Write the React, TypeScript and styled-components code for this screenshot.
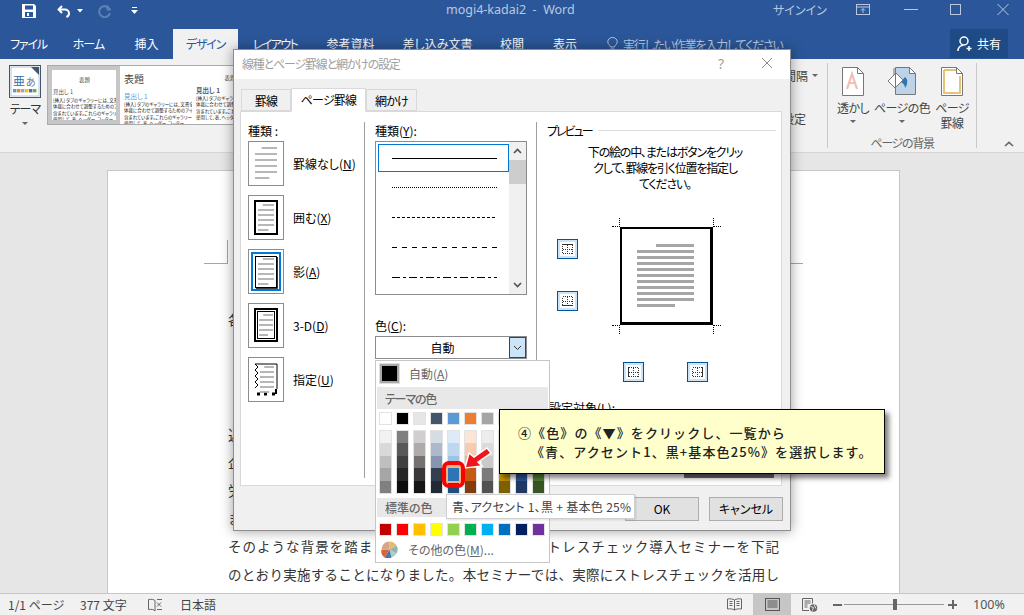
import type { ReactNode } from 'react';
import styled, { createGlobalStyle } from 'styled-components';

const GlobalStyle = createGlobalStyle`
  html, body {
    margin: 0;
    padding: 0;
    height: 100%;
    overflow: hidden;
  }
  body {
    font-family: "Noto Sans CJK JP", "Noto Sans", sans-serif;
    font-size: 12px;
    color: #000;
    font-feature-settings: "palt";
  }
  * {
    box-sizing: border-box;
  }
`;

const Window = styled.div`
  position: relative;
  width: 1024px;
  height: 615px;
  display: flex;
  flex-direction: column;
  overflow: hidden;
  background: #e6e6e6;
`;

const Spacer = styled.span<{ $width: number }>`
  width: ${(p) => p.$width}px;
  flex: none;
`;

const Glyph = styled.svg<{ $left?: number }>`
  flex: none;
  margin-left: ${(p) => p.$left ?? 0}px;
`;

/* title bar */
const TitleBar = styled.div`
  height: 29px;
  flex: none;
  background: #2b579a;
  display: flex;
  align-items: flex-start;
  color: #b9c8e0;
  padding-left: 22px;
`;

const QuickAccess = styled.div`
  width: 424px;
  flex: none;
  display: flex;
  align-items: center;
  gap: 6px;
  margin-top: 4px;
`;

const DocTitle = styled.div`
  width: 327px;
  flex: none;
  font-family: "Noto Sans", sans-serif;
  font-size: 12.5px;
  line-height: 19px;
`;

const SignIn = styled.div`
  width: 83px;
  flex: none;
  font-size: 12px;
  line-height: 19px;
`;

const WindowButtons = styled.div`
  display: flex;
  align-items: center;
  gap: 34px;
  height: 19px;
`;

/* tab row */
const TabRow = styled.div`
  height: 30px;
  flex: none;
  background: #2b579a;
  display: flex;
  align-items: stretch;
`;

const Tab = styled.div<{ $width: number; $active?: boolean; $spacing: number }>`
  width: ${(p) => p.$width}px;
  flex: none;
  display: flex;
  align-items: center;
  justify-content: center;
  font-size: 12px;
  padding-bottom: 1px;
  letter-spacing: ${(p) => p.$spacing}px;
  color: ${(p) => (p.$active ? '#2b579a' : '#fff')};
  background: ${(p) => (p.$active ? '#f1f1f1' : 'transparent')};
`;

const TellMe = styled.div`
  width: 358px;
  flex: none;
  display: flex;
  align-items: center;
  gap: 5px;
  padding-left: 15px;
  color: #b9c8e0;
  letter-spacing: -1.2px;
`;

const ShareButton = styled.div`
  width: 58px;
  height: 29px;
  flex: none;
  background: #1e4a86;
  color: #fff;
  display: flex;
  align-items: center;
  justify-content: center;
  gap: 3px;
`;

/* ribbon */
const Ribbon = styled.div`
  height: 94px;
  flex: none;
  background: #f1f1f1;
  border-bottom: 1px solid #d6d6d6;
  display: flex;
`;

const ThemeButton = styled.div`
  width: 47px;
  flex: none;
  padding: 6px 6px 0 9px;
  display: flex;
  flex-direction: column;
  align-items: center;
`;

const ThemeLabel = styled.div`
  text-align: center;
  font-size: 12px;
  margin-top: 3px;
  line-height: 16px;
  color: #333;
  letter-spacing: -1px;
  white-space: nowrap;
`;

const Caret = styled.span<{ $top?: number }>`
  display: block;
  width: 0;
  height: 0;
  flex: none;
  border-left: 3px solid transparent;
  border-right: 3px solid transparent;
  border-top: 3px solid #666;
  margin-top: ${(p) => p.$top ?? 0}px;
`;

const Gallery = styled.div`
  width: 713px;
  height: 60px;
  margin-top: 6px;
  flex: none;
  border: 1px solid #ababab;
  background: #fff;
  display: flex;
  overflow: hidden;
`;

const GalleryItem = styled.div<{ $selected?: boolean }>`
  width: 72px;
  flex: none;
  background: #fff;
  border: ${(p) => (p.$selected ? '4px solid #c6c6c6' : 'none')};
  padding: ${(p) => (p.$selected ? '4px 0 0 1px' : '6px 0 0 4px')};
  overflow: hidden;
  font-size: 4.5px;
  line-height: 6.4px;
  color: #222;
  white-space: nowrap;
`;

const GalleryTitle = styled.div<{ $large?: boolean }>`
  text-align: ${(p) => (p.$large ? 'left' : 'center')};
  font-size: ${(p) => (p.$large ? 10 : 5.5)}px;
  line-height: ${(p) => (p.$large ? 14 : 13)}px;
  color: #444;
  margin-bottom: ${(p) => (p.$large ? 6 : 1)}px;
`;

const GalleryHeading = styled.div<{ $tone?: 'blue' | 'bold' }>`
  font-size: ${(p) => (p.$tone ? 6.5 : 5.5)}px;
  line-height: 9px;
  font-weight: ${(p) => (p.$tone === 'bold' ? 700 : 400)};
  color: ${(p) => (p.$tone === 'blue' ? '#5b9bd5' : '#555')};
`;

const SpacingGroup = styled.div`
  flex: 1;
  min-width: 0;
  display: flex;
  flex-direction: column;
  align-items: flex-end;
  gap: 26px;
  padding: 8px 9px 0 0;
  color: #444;
  white-space: nowrap;
  font-size: 12px;
`;

const SpacingRow = styled.div<{ $inset?: number }>`
  display: flex;
  align-items: center;
  gap: 4px;
  margin-right: ${(p) => p.$inset ?? 0}px;
`;

const RibbonGroup = styled.div`
  width: 150px;
  flex: none;
  height: 85px;
  margin-top: 4px;
  border-left: 1px solid #c8c8c8;
  border-right: 1px solid #c8c8c8;
  display: flex;
  flex-direction: column;
`;

const RibbonButtons = styled.div`
  display: flex;
  height: 72px;
  flex: none;
  padding-left: 5px;
`;

const RibbonButton = styled.div<{ $width: number }>`
  width: ${(p) => p.$width}px;
  flex: none;
  display: flex;
  flex-direction: column;
  align-items: center;
  padding-top: 4px;
  font-size: 12px;
  line-height: 15px;
  color: #444;
  text-align: center;
  white-space: nowrap;
  letter-spacing: -0.6px;
  svg {
    margin-bottom: 4px;
  }
`;

const GroupLabel = styled.div`
  text-align: center;
  color: #666;
  font-size: 12px;
  line-height: 16px;
  letter-spacing: -1.3px;
`;

const CollapseArea = styled.div`
  width: 47px;
  flex: none;
  display: flex;
  align-items: flex-end;
  justify-content: flex-end;
  padding: 0 10px 5px 0;
`;

/* document */
const Workspace = styled.div`
  flex: 1;
  min-height: 0;
  background: #e6e6e6;
  padding: 17px 0 0 107px;
  overflow: hidden;
`;

const Page = styled.div`
  position: relative;
  width: 793px;
  height: 500px;
  background: #fff;
  border: 1px solid #c6c6c6;
  padding: 134px 0 0 120px;
`;

const CropMark = styled.span<{ $side: 'left' | 'right' }>`
  position: absolute;
  top: 69px;
  width: 24px;
  height: 24px;
  border-bottom: 1px solid #a6a6a6;
  ${(p) =>
    p.$side === 'left'
      ? 'left: 96px; border-right: 1px solid #a6a6a6;'
      : 'left: 671px; border-left: 1px solid #a6a6a6;'}
`;

const DocLine = styled.div<{ $gap?: number }>`
  width: 551px;
  height: 28px;
  line-height: 28px;
  margin-top: ${(p) => p.$gap ?? 0}px;
  font-size: 13.5px;
  color: #333;
  white-space: nowrap;
  font-feature-settings: normal;
  text-align: justify;
  text-align-last: justify;
  text-justify: inter-character;
`;

/* status bar */
const StatusBar = styled.div`
  height: 22px;
  flex: none;
  background: #f1f1f1;
  border-top: 1px solid #c6c6c6;
  display: flex;
  align-items: stretch;
  padding-left: 8px;
  color: #444;
  font-size: 12px;
`;

const StatusItem = styled.div<{ $width: number }>`
  width: ${(p) => p.$width}px;
  flex: none;
  display: flex;
  align-items: center;
  white-space: nowrap;
`;

const ViewButton = styled.div<{ $active?: boolean; $width: number }>`
  width: ${(p) => p.$width}px;
  flex: none;
  display: flex;
  align-items: center;
  justify-content: center;
  background: ${(p) => (p.$active ? '#c6c6c6' : 'transparent')};
`;

const ZoomGroup = styled.div`
  display: flex;
  align-items: center;
  margin-left: 4px;
`;

const ZoomSign = styled.span`
  width: 9px;
  height: 9px;
  flex: none;
  position: relative;
  &::before {
    content: '';
    position: absolute;
    left: 0;
    right: 0;
    top: 4px;
    height: 2px;
    background: #666;
  }
`;

const ZoomPlus = styled(ZoomSign)`
  &::after {
    content: '';
    position: absolute;
    top: 0;
    bottom: 0;
    left: 4px;
    width: 2px;
    background: #666;
  }
`;

const ZoomTrack = styled.div`
  width: 100px;
  height: 1px;
  margin: 0 4px 0 2px;
  background: #999;
  position: relative;
  &::after {
    content: '';
    position: absolute;
    left: 49px;
    top: -5px;
    width: 4px;
    height: 11px;
    background: #666;
  }
`;

const ZoomValue = styled.div`
  margin-left: 16px;
  font-size: 12.5px;
  font-family: "Noto Sans", sans-serif;
  color: #555;
`;

/* dialog */
const Dialog = styled.div`
  position: absolute;
  left: 233px;
  top: 49px;
  width: 558px;
  height: 482px;
  background: #f0f0f0;
  border: 1px solid #8e8e8e;
  box-shadow: 0 0 12px rgba(0, 0, 0, 0.4);
  display: flex;
  flex-direction: column;
`;

const DialogTitle = styled.div`
  height: 29px;
  flex: none;
  background: #fff;
  display: flex;
  align-items: center;
  padding: 0 0 3px 8px;
  color: #a0a0a0;
`;

const DialogTitleText = styled.div`
  flex: 1;
  letter-spacing: -1.2px;
`;

const HelpMark = styled.div`
  width: 43px;
  font-family: "Noto Sans", sans-serif;
  color: #a0a0a0;
  font-size: 14px;
`;

const CloseSlot = styled.div`
  width: 29px;
  display: flex;
`;

const DialogTabs = styled.div`
  height: 32px;
  flex: none;
  display: flex;
  align-items: flex-end;
  padding-left: 7px;
  position: relative;
  z-index: 1;
`;

const DialogTab = styled.div<{ $active?: boolean; $width: number }>`
  width: ${(p) => p.$width}px;
  height: ${(p) => (p.$active ? 24 : 22)}px;
  text-align: center;
  line-height: ${(p) => (p.$active ? 22 : 21)}px;
  font-size: 12px;
  letter-spacing: -0.8px;
  background: ${(p) => (p.$active ? '#fff' : '#f0f0f0')};
  border: 1px solid #d9d9d9;
  border-bottom: ${(p) => (p.$active ? '1px solid #fff' : '1px solid #d9d9d9')};
  margin-bottom: ${(p) => (p.$active ? -1 : 0)}px;
`;

const Panel = styled.div`
  width: 542px;
  height: 375px;
  margin-left: 6px;
  flex: none;
  background: #fff;
  border: 1px solid #d9d9d9;
  display: flex;
  padding-top: 10px;
`;

const StyleColumn = styled.div`
  width: 124px;
  flex: none;
  padding-left: 7px;
  border-right: 1px solid #a0a0a0;
  height: 356px;
`;

const FieldLabel = styled.div`
  height: 19px;
  line-height: 17px;
  font-size: 12px;
`;

const StyleOption = styled.div`
  display: flex;
  align-items: center;
  gap: 9px;
  height: 45px;
  margin-bottom: 9px;
  font-size: 12px;
`;

const ThumbBox = styled.div`
  width: 36px;
  height: 45px;
  flex: none;
  border: 1px solid #8c8c90;
  background: #fff;
  display: flex;
`;

const LineColumn = styled.div`
  width: 172px;
  flex: none;
  padding: 0 9px 0 10px;
  border-right: 1px solid #a0a0a0;
  height: 356px;
`;

const LineList = styled.div`
  width: 152px;
  height: 154px;
  border: 1px solid #8c8c90;
  display: flex;
  margin-bottom: 22px;
`;

const LineRows = styled.div`
  width: 133px;
  flex: none;
  padding: 2px 0 0 2px;
  display: flex;
  flex-direction: column;
`;

const LineRow = styled.div<{ $selected?: boolean }>`
  height: ${(p) => (p.$selected ? 28 : 30)}px;
  flex: none;
  display: flex;
  align-items: center;
  padding-left: 13px;
  border: ${(p) => (p.$selected ? '1px solid #0078d7' : 'none')};
  margin-left: ${(p) => (p.$selected ? 0 : 1)}px;
`;

const LineSample = styled.div<{ $pattern: string }>`
  width: 105px;
  height: 1px;
  background: ${(p) => p.$pattern};
`;

const ScrollTrack = styled.div`
  flex: 1;
  background: #f0f0f0;
  display: flex;
  flex-direction: column;
  align-items: center;
`;

const ScrollArrow = styled.div`
  height: 18px;
  flex: none;
  display: flex;
  align-items: center;
  justify-content: center;
`;

const ScrollThumb = styled.div`
  width: 100%;
  height: 24px;
  background: #cdcdcd;
  margin-bottom: auto;
`;

const ColorCombo = styled.div`
  width: 152px;
  height: 23px;
  border: 1px solid #8c8c90;
  display: flex;
  align-items: stretch;
  font-size: 12px;
`;

const ComboValue = styled.div`
  flex: 1;
  text-align: center;
  line-height: 21px;
`;

const ComboArrow = styled.div`
  width: 17px;
  flex: none;
  background: #cce4f7;
  border: 1px solid #005499;
  display: flex;
  align-items: center;
  justify-content: center;
`;

const PreviewColumn = styled.div`
  flex: 1;
  padding-left: 10px;
  min-width: 0;
`;

const PreviewHeader = styled.div`
  display: flex;
  align-items: center;
  gap: 6px;
  height: 17px;
  padding-right: 5px;
  letter-spacing: -2px;
  &::after {
    content: '';
    flex: 1;
    height: 1px;
    background: #dcdcdc;
  }
`;

const PreviewHint = styled.div`
  width: 190px;
  margin: 5px 0 0 23px;
  text-align: center;
  line-height: 16px;
  font-size: 12px;
  letter-spacing: -1.2px;
`;

const PreviewStage = styled.div`
  display: flex;
  align-items: flex-start;
  margin: 35px 0 0 10px;
`;

const SideButtons = styled.div`
  width: 21px;
  flex: none;
  display: flex;
  flex-direction: column;
  gap: 32px;
  padding-top: 12px;
`;

const BorderToggle = styled.div`
  width: 21px;
  height: 20px;
  flex: none;
  background: #cce4f7;
  border: 1px solid #005499;
  display: flex;
  align-items: center;
  justify-content: center;
`;

const PreviewPage = styled.div`
  position: relative;
  width: 93px;
  height: 98px;
  margin-left: 42px;
  border: 2px solid #000;
  border-right-width: 3px;
  border-bottom-width: 3px;
  padding: 15px 0 0 15px;
  display: flex;
  flex-direction: column;
  gap: 3px;
`;

const PreviewLine = styled.div<{ $width: number; $right?: boolean }>`
  width: ${(p) => p.$width}px;
  height: 3px;
  background: #a6a6a6;
  margin-left: ${(p) => (p.$right ? 57 - p.$width : 0)}px;
`;

const CornerMark = styled.span<{ $x: 'l' | 'r'; $y: 't' | 'b' }>`
  position: absolute;
  width: 8px;
  height: 9px;
  ${(p) => (p.$x === 'l' ? 'left: -10px; border-right: 1px dotted #000;' : 'right: -11px; border-left: 1px dotted #000;')}
  ${(p) => (p.$y === 't' ? 'top: -11px; border-bottom: 1px dotted #000;' : 'bottom: -12px; border-top: 1px dotted #000;')}
`;

const BottomButtons = styled.div`
  display: flex;
  gap: 43px;
  margin: 37px 0 0 76px;
`;

const ApplyLabel = styled.div`
  margin-top: 18px;
  padding-left: 2px;
  line-height: 16px;
`;

const OptionsRow = styled.div`
  display: flex;
  justify-content: flex-end;
  padding: 58px 7px 0 0;
`;

const OptionsButton = styled.div`
  width: 90px;
  height: 4px;
  background: #6a6a6a;
`;

const DialogActions = styled.div`
  display: flex;
  justify-content: flex-end;
  gap: 10px;
  padding: 11px 7px 0 0;
`;

const ActionButton = styled.div<{ $width: number }>`
  width: ${(p) => p.$width}px;
  height: 24px;
  background: #e1e1e1;
  border: 1px solid #adadad;
  text-align: center;
  line-height: 22px;
  font-size: 12px;
`;

/* colour dropdown */
const ColorMenu = styled.div`
  position: absolute;
  left: 375px;
  top: 360px;
  width: 175px;
  height: 203px;
  background: #fff;
  border: 1px solid #c6c6c6;
  padding: 0 1px;
`;

const MenuRow = styled.div`
  height: 25px;
  display: flex;
  align-items: center;
  gap: 10px;
  padding-left: 3px;
  color: #666;
`;

const AutoSwatch = styled.span`
  width: 19px;
  height: 19px;
  flex: none;
  background: #000;
  border: 2px solid #a8a8a8;
  outline: 1px solid #e0e0e0;
`;

const MenuHeader = styled.div<{ $height: number; $top: number; $spacing?: number }>`
  height: ${(p) => p.$height}px;
  margin-top: ${(p) => p.$top}px;
  background: #e8e8e8;
  display: flex;
  align-items: center;
  padding-left: 8px;
  font-weight: 500;
  color: #666;
  letter-spacing: ${(p) => p.$spacing ?? 0}px;
`;

const PaletteRow = styled.div<{ $top: number }>`
  display: grid;
  grid-template-columns: repeat(10, 13px);
  column-gap: 4px;
  margin-top: ${(p) => p.$top}px;
  padding-left: 2px;
`;

const Swatch = styled.span<{ $color: string }>`
  display: block;
  height: 13px;
  background: ${(p) => p.$color};
  border: 1px solid #e2e2e2;
`;

const ShadeColumn = styled.div`
  display: flex;
  flex-direction: column;
  border: 1px solid #e2e2e2;
`;

const Shade = styled.span<{ $color: string; $selected?: boolean }>`
  display: block;
  height: 12.4px;
  background: ${(p) => p.$color};
  position: relative;
  ${(p) =>
    p.$selected &&
    `
    z-index: 2;
    &::before {
      content: '';
      position: absolute;
      inset: -2px -2px;
      border: 2px solid #f4b183;
    }
    &::after {
      content: '';
      position: absolute;
      inset: -7px -6px;
      border: 4px solid #f00;
      border-radius: 7px;
    }
  `}
`;

const OtherRow = styled.div`
  height: 24px;
  margin-top: 2px;
  display: flex;
  align-items: center;
  gap: 10px;
  padding-left: 4px;
  color: #666;
`;

const RedArrow = styled.svg`
  position: absolute;
  left: 463px;
  top: 446px;
`;

/* callout and tooltip */
const Callout = styled.div`
  position: absolute;
  left: 499px;
  top: 409px;
  width: 386px;
  height: 65px;
  background: #ffffcc;
  border: 1px solid #000;
  box-shadow: 4px 4px 5px rgba(0, 0, 0, 0.5);
  padding-top: 13px;
  font-size: 13px;
  font-weight: 500;
  line-height: 19px;
  color: #222;
  font-feature-settings: normal;
  letter-spacing: 1.1px;
  white-space: nowrap;
`;

const CalloutLine = styled.div<{ $indent: number }>`
  padding-left: ${(p) => p.$indent}px;
`;

const Tooltip = styled.div`
  position: absolute;
  left: 446px;
  top: 494px;
  width: 189px;
  height: 25px;
  background: #fff;
  border: 1px solid #cfcfcf;
  box-shadow: 1px 1px 2px rgba(0, 0, 0, 0.12);
  color: #444;
  font-size: 12px;
  line-height: 23px;
  padding-left: 5px;
  white-space: nowrap;
  letter-spacing: 0.3px;
`;

const pale = '#b9c8e0';

function SaveIcon() {
  return (
    <svg width="14" height="14" viewBox="0 0 14 14">
      <path d="M0 0h12l2 2v12H0z" fill="#fff" />
      <rect x="3" y="1.5" width="8" height="4" fill="#2b579a" />
      <rect x="3" y="8" width="8" height="5" fill="#2b579a" />
      <rect x="5" y="9" width="2" height="3" fill="#fff" />
    </svg>
  );
}

function UndoIcon() {
  return (
    <svg width="14" height="13" viewBox="0 0 14 13" fill="none" stroke="#fff" strokeWidth="2">
      <path d="M5 1 1.6 4.5 5 8" />
      <path d="M2 4.500h6a4 4 0 0 1 4 4c0 1.600-1.200 3-2.600 3.500" />
    </svg>
  );
}

function RedoIcon() {
  return (
    <svg width="14" height="14" viewBox="0 0 14 14" fill="none" stroke="#5e80b4" strokeWidth="2">
      <path d="M9.500 1.500v4h3.500" />
      <path d="M11.500 5A5.500 5.500 0 1 0 12 9" />
    </svg>
  );
}

function SmallCaret() {
  return (
    <svg width="6" height="4" viewBox="0 0 6 4">
      <path d="M0 0h6L3 3.500z" fill="#fff" />
    </svg>
  );
}

function CustomizeIcon() {
  return (
    <svg width="7" height="8" viewBox="0 0 7 8" fill="#fff">
      <rect x="1" y="0" width="5" height="1" />
      <path d="M0 3h7L3.500 7z" />
    </svg>
  );
}

function WindowIcons() {
  return (
    <WindowButtons>
      <Glyph width="14" height="11" viewBox="0 0 14 11" fill="none" stroke={pale}>
        <rect x="0.5" y="0.5" width="13" height="10" />
        <path d="M0.500 3h13M7 9V5M5 6.500 7 4.500l2 2" />
      </Glyph>
      <Glyph width="14" height="11" viewBox="0 0 14 11" stroke={pale}>
        <path d="M0 5.500h14" />
      </Glyph>
      <Glyph width="12" height="11" viewBox="0 0 12 11" fill="none" stroke={pale} $left={-2}>
        <rect x="0.5" y="0.5" width="10" height="10" />
      </Glyph>
      <Glyph width="14" height="11" viewBox="0 0 14 11" stroke={pale}>
        <path d="M1.500 0 12.500 11M12.500 0 1.500 11" />
      </Glyph>
    </WindowButtons>
  );
}

function BulbIcon() {
  return (
    <svg width="11" height="15" viewBox="0 0 11 15" fill="none" stroke={pale}>
      <path d="M3.500 10C3 8 .8 7.300.8 4.700a4.700 4.200 0 0 1 9.400 0C10.200 7.300 8 8 7.500 10z" />
      <path d="M3.500 12h4M4.500 14h2" />
    </svg>
  );
}

function ShareIcon() {
  return (
    <svg width="17" height="16" viewBox="0 0 17 16" fill="none" stroke="#fff" strokeWidth="1.5">
      <circle cx="7" cy="5" r="4" />
      <path d="M1 15c0-3 2-5.500 5-5.800M12 10v5M9.500 12.500h5" />
    </svg>
  );
}

function ThemeIcon() {
  return (
    <svg width="32" height="33" viewBox="0 0 32 33">
      <rect x="0.5" y="0.5" width="31" height="32" fill="#fff" stroke="#44546a" />
      <rect x="2" y="2" width="28" height="29" fill="#fff" stroke="#b8c4d6" />
      <path d="M22 2h8v8z" fill="#44546a" />
      <text x="4" y="21" fontSize="12" fill="#3a6ea5" fontFamily='"Noto Sans CJK JP"'>亜</text>
      <text x="17" y="21" fontSize="10" fill="#777" fontFamily='"Noto Sans CJK JP"'>あ</text>
      {['#5b9bd5', '#ed7d31', '#a5a5a5', '#ffc000', '#4472c4', '#70ad47'].map((c, i) => (
        <rect key={c} x={4 + i * 4} y="24" width="3.4" height="3.4" fill={c} />
      ))}
    </svg>
  );
}

function PageSheet({ children }: { children?: ReactNode }) {
  return (
    <svg width="30" height="29" viewBox="0 0 30 29" fill="none">
      {children}
      <path d="M8.500.5h14l6 6v21h-20zM22.500.5v6h6" stroke="#777" />
    </svg>
  );
}

function WatermarkIcon() {
  return (
    <svg width="22" height="29" viewBox="0 0 22 29" fill="none">
      <path d="M.5.5h15l6 6v22H.5z" fill="#fff" stroke="#777" />
      <path d="M15.500.5v6h6" stroke="#777" />
      <path d="M5 22 10 7l5 15M7 16h7" stroke="#f0bfb4" strokeWidth="2.2" />
    </svg>
  );
}

function PageColorIcon() {
  return (
    <PageSheet>
      <path d="M8.500.5h14l6 6v21h-20z" fill="#bcd3e8" />
      <path d="M22.500.5v6h6z" fill="#fff" />
      <path d="M18 10c3 2 3 7 0 11 0-3-2-5-4-6z" fill="#2e75b5" />
      <path d="M1 14 9 6l7 7-8 8z" fill="#fff" stroke="#777" />
      <path d="M7 1v7" stroke="#777" />
    </PageSheet>
  );
}

function PageBorderIcon() {
  return (
    <svg width="22" height="29" viewBox="0 0 22 29" fill="none">
      <path d="M.5.5h15l6 6v22H.5z" fill="#fff" stroke="#777" />
      <path d="M15.500.5v6h6" stroke="#777" />
      <path d="M3 3h12M3 3v23h16V9" stroke="#e9c27a" strokeWidth="2" />
    </svg>
  );
}

function ChevronUp() {
  return (
    <svg width="10" height="6" viewBox="0 0 10 6" fill="none" stroke="#666" strokeWidth="1.6">
      <path d="M1 5 5 1.400 9 5" />
    </svg>
  );
}

function Chevron({ down, color = '#505050' }: { down?: boolean; color?: string }) {
  return (
    <svg width="9" height="6" viewBox="0 0 9 6" fill="none" stroke={color} strokeWidth={down && color !== '#505050' ? 1 : 1.6}>
      <path d={down ? 'M1 1l3.500 3.500L8 1' : 'M1 5l3.500-3.500L8 5'} />
    </svg>
  );
}

const thumbLines = (x: number, right: number, y: number, step: number, count: number) =>
  Array.from({ length: count }, (_, i) => {
    const first = i === 0;
    const last = i === count - 1;
    const x1 = first ? x + (right - x) * 0.3 : x;
    const x2 = last ? x + (right - x) * 0.65 : right;
    return <path key={i} d={`M${x1} ${y + i * step}H${x2}`} stroke="#a6a6a6" strokeWidth="1.6" />;
  });

function StyleThumb({ kind }: { kind: 'none' | 'box' | 'shadow' | '3d' | 'custom' }) {
  return (
    <svg width="34" height="43" viewBox="0 0 34 43" fill="none">
      {kind === 'none' && thumbLines(6, 28, 6, 6, 6)}
      {kind === 'box' && (
        <>
          <rect x="6" y="5" width="22" height="33" stroke="#000" strokeWidth="2" />
          {thumbLines(9, 25, 9, 5, 6)}
        </>
      )}
      {kind === 'shadow' && (
        <>
          <rect x="3" y="3" width="28" height="37" stroke="#0078d7" strokeWidth="2" />
          <rect x="6.500" y="6.500" width="21" height="31" stroke="#000" />
          <path d="M28 7v31H7" stroke="#000" strokeWidth="1.6" />
          {thumbLines(9, 25, 9, 5, 6)}
        </>
      )}
      {kind === '3d' && (
        <>
          <rect x="6" y="5" width="22" height="32" stroke="#000" strokeWidth="2" />
          <rect x="8.500" y="7.500" width="17" height="27" stroke="#000" />
          {thumbLines(10, 24, 11, 5, 5)}
        </>
      )}
      {kind === 'custom' && (
        <>
          <path d="M6 6H28V31" stroke="#000" />
          <path d="M6 6l3 3-3 3 3 3-3 3 3 3-3 3 3 3-3 3" stroke="#000" />
          <path d="M8 36h3M15 36h3M23 36h3" stroke="#000" strokeWidth="3" />
          <path d="M27 36v-5" stroke="#000" strokeWidth="2" />
          {thumbLines(11, 25, 9, 5, 6)}
        </>
      )}
    </svg>
  );
}

function EdgeGlyph({ edge }: { edge: 'top' | 'bottom' | 'left' | 'right' }) {
  const solid = {
    top: 'M3 3.500H14',
    bottom: 'M3 12.500H14',
    left: 'M3.500 3V13',
    right: 'M13.500 3V13',
  }[edge];
  return (
    <svg width="17" height="16" viewBox="0 0 17 16" fill="none" shapeRendering="crispEdges">
      <rect x="1" y="1" width="15" height="14" fill="#fff" />
      <rect x="3.500" y="3.500" width="10" height="9" stroke="#333" strokeDasharray="1 1" />
      <path d="M8.500 3.500v9M3.500 8.500h10" stroke="#333" strokeDasharray="1 1" />
      <path d={solid} stroke="#333" />
    </svg>
  );
}

function PieIcon() {
  return (
    <svg width="17" height="17" viewBox="0 0 17 17">
      <path d="M8.500 8.500V.5a8 8 0 0 1 7 4z" fill="#e9b872" />
      <path d="M8.500 8.500l7-4a8 8 0 0 1 0 8z" fill="#8fb8a8" />
      <path d="M8.500 8.500l7 4a8 8 0 0 1-5 4z" fill="#8fb8a8" opacity="0.7" />
      <path d="M8.500 8.500l2 8a8 8 0 0 1-7 0z" fill="#3f78b5" />
      <path d="M8.500 8.500l-5 8a8 8 0 0 1-3-8z" fill="#d9633a" />
      <path d="M8.500 8.500h-8a8 8 0 0 1 8-8z" fill="#d8a48c" />
    </svg>
  );
}

function BookIcon() {
  return (
    <svg width="15" height="14" viewBox="0 0 15 14" fill="none" stroke="#666">
      <path d="M7 2.500C6 1.500 3 1 .5 1.500v10c2.500-.5 5.500 0 6.500 1.500" />
      <path d="M7 2.500V13" />
      <path d="M9 4.500l4 4M13 4.500l-4 4M9 1.500h5M9 11.500h5" />
    </svg>
  );
}

function ReadIcon() {
  return (
    <svg width="15" height="13" viewBox="0 0 15 13" fill="none" stroke="#666">
      <path d="M7.500 2C6 1 3 .5.500 1v10c2.500-.5 5.500 0 7 1 1.500-1 4.500-1.500 7-1V1c-2.500-.5-5.500 0-7 1zM7.500 2v10" />
      <path d="M2.500 3.500h3M2.500 5.500h3M2.500 7.500h3M9.500 3.500h3M9.500 5.500h3M9.500 7.500h3" />
    </svg>
  );
}

function PrintIcon() {
  return (
    <svg width="15" height="13" viewBox="0 0 15 13" fill="none" stroke="#555">
      <rect x="0.5" y="0.5" width="14" height="12" />
      <path d="M2.500 3h10M2.500 5h10M2.500 7h10M2.500 9h10" />
    </svg>
  );
}

function WebIcon() {
  return (
    <svg width="16" height="14" viewBox="0 0 16 14" fill="none" stroke="#666">
      <path d="M7 12.500H.5V.5h10v5M2.500 3h6M2.500 5h6M2.500 7h3M2.500 9h3" />
      <circle cx="11.500" cy="10" r="3.800" fill="#666" stroke="none" />
      <path d="M8.500 8.500l3 1-1 3M12 6.500l2 4" stroke="#fff" strokeWidth="0.800" />
    </svg>
  );
}

const themeColumns = [
  { base: '#ffffff', shades: ['#f2f2f2', '#d9d9d9', '#bfbfbf', '#a6a6a6', '#808080'] },
  { base: '#000000', shades: ['#7f7f7f', '#595959', '#404040', '#262626', '#0d0d0d'] },
  { base: '#e7e6e6', shades: ['#d0cece', '#afabab', '#767171', '#3a3838', '#171616'] },
  { base: '#44546a', shades: ['#d6dce4', '#adb9ca', '#8496b0', '#333f4f', '#222a35'] },
  { base: '#5b9bd5', shades: ['#deeaf6', '#bdd7ee', '#9cc3e5', '#2e75b5', '#1e4e79'] },
  { base: '#ed7d31', shades: ['#fbe5d5', '#f7cbac', '#f4b183', '#c55a11', '#833c0b'] },
  { base: '#a5a5a5', shades: ['#ededed', '#dbdbdb', '#c9c9c9', '#7b7b7b', '#525252'] },
  { base: '#ffc000', shades: ['#fff2cc', '#fee599', '#ffd965', '#bf8f00', '#7f6000'] },
  { base: '#4472c4', shades: ['#d9e2f3', '#b4c6e7', '#8eaadb', '#2f5496', '#1f3864'] },
  { base: '#70ad47', shades: ['#e2efd9', '#c5e0b3', '#a8d08d', '#538135', '#375623'] },
];

const standardColors = [
  '#c00000', '#ff0000', '#ffc000', '#ffff00', '#92d050',
  '#00b050', '#00b0f0', '#0070c0', '#002060', '#7030a0',
];

const ribbonTabs = [
  { label: 'ファイル', width: 57, spacing: -1.2 },
  { label: 'ホーム', width: 63, spacing: -1 },
  { label: '挿入', width: 53, spacing: 0 },
  { label: 'デザイン', width: 65, spacing: -1.2, active: true },
  { label: 'レイアウト', width: 74, spacing: -1.6 },
  { label: '参考資料', width: 77, spacing: 0 },
  { label: '差し込み文書', width: 97, spacing: 0 },
  { label: '校閲', width: 52, spacing: 0 },
  { label: '表示', width: 54, spacing: 0 },
];

const lineStyles = [
  '#000',
  'repeating-linear-gradient(90deg, #000 0 1px, #fff 1px 2px)',
  'repeating-linear-gradient(90deg, #000 0 3px, #fff 3px 5px)',
  'repeating-linear-gradient(90deg, #000 0 5px, #fff 5px 10px)',
  'repeating-linear-gradient(90deg, #000 0 8px, #fff 8px 11px, #000 11px 14px, #fff 14px 17px)',
];

function BodyLines() {
  return (
    <>
      <div>[挿入] タブのギャラリーには、文書全体の</div>
      <div>体裁に合わせて調整するためのアイテムが</div>
      <div>含まれています。これらのギャラリーを</div>
      <div>使用して、表、ヘッダー、フッター、</div>
    </>
  );
}

export default function App() {
  return (
    <Window>
      <GlobalStyle />

      <TitleBar>
        <QuickAccess>
          <SaveIcon />
          <Spacer $width={9} />
          <UndoIcon />
          <SmallCaret />
          <Spacer $width={3} />
          <RedoIcon />
          <Spacer $width={7} />
          <CustomizeIcon />
        </QuickAccess>
        <DocTitle>mogi4-kadai2&nbsp; -&nbsp; Word</DocTitle>
        <SignIn>サインイン</SignIn>
        <WindowIcons />
      </TitleBar>

      <TabRow>
        {ribbonTabs.map((t) => (
          <Tab key={t.label} $width={t.width} $active={t.active} $spacing={t.spacing}>
            {t.label}
          </Tab>
        ))}
        <TellMe>
          <BulbIcon />
          実行したい作業を入力してください
        </TellMe>
        <ShareButton>
          <ShareIcon />
          共有
        </ShareButton>
      </TabRow>

      <Ribbon>
        <ThemeButton>
          <ThemeIcon />
          <ThemeLabel>テーマ</ThemeLabel>
          <Caret $top={5} />
        </ThemeButton>
        <Gallery>
          <GalleryItem $selected>
            <GalleryTitle>表題</GalleryTitle>
            <GalleryHeading>見出し 1</GalleryHeading>
            <BodyLines />
          </GalleryItem>
          <GalleryItem>
            <GalleryTitle $large>表題</GalleryTitle>
            <GalleryHeading $tone="blue">見出し 1</GalleryHeading>
            <BodyLines />
          </GalleryItem>
          <GalleryItem>
            <GalleryTitle>表題</GalleryTitle>
            <GalleryHeading $tone="bold">見出し 1</GalleryHeading>
            <BodyLines />
          </GalleryItem>
        </Gallery>
        <SpacingGroup>
          <SpacingRow>
            段落の間隔
            <Caret />
          </SpacingRow>
          <SpacingRow $inset={12}>既定に設定</SpacingRow>
        </SpacingGroup>
        <RibbonGroup>
          <RibbonButtons>
            <RibbonButton $width={40}>
              <WatermarkIcon />
              透かし
              <Caret $top={5} />
            </RibbonButton>
            <RibbonButton $width={58}>
              <PageColorIcon />
              ページの色
              <Caret $top={5} />
            </RibbonButton>
            <RibbonButton $width={42}>
              <PageBorderIcon />
              ページ
              <br />
              罫線
            </RibbonButton>
          </RibbonButtons>
          <GroupLabel>ページの背景</GroupLabel>
        </RibbonGroup>
        <CollapseArea>
          <ChevronUp />
        </CollapseArea>
      </Ribbon>

      <Workspace>
        <Page>
          <CropMark $side="left" />
          <CropMark $side="right" />
          <DocLine>各位</DocLine>
          <DocLine $gap={87}>近年、企業のメンタルヘルス対策の重要性が高まっています。</DocLine>
          <DocLine>企業には従業員の心の健康を守る取り組みが求められています。</DocLine>
          <DocLine>労働安全衛生法の改正により検査の実施が義務付けられました。</DocLine>
          <DocLine>また、検査結果を職場環境の改善に生かすことも大切です。</DocLine>
          <DocLine>そのような背景を踏まえ、弊社では、このたびストレスチェック導入セミナーを下記</DocLine>
          <DocLine>のとおり実施することになりました。本セミナーでは、実際にストレスチェックを活用し</DocLine>
        </Page>
      </Workspace>

      <StatusBar>
        <StatusItem $width={72}>1/1 ページ</StatusItem>
        <StatusItem $width={68}>377 文字</StatusItem>
        <StatusItem $width={32}>
          <BookIcon />
        </StatusItem>
        <StatusItem $width={540}>日本語</StatusItem>
        <ViewButton $width={28}>
          <ReadIcon />
        </ViewButton>
        <Spacer $width={5} />
        <ViewButton $width={38} $active>
          <PrintIcon />
        </ViewButton>
        <ViewButton $width={38}>
          <WebIcon />
        </ViewButton>
        <ZoomGroup>
          <ZoomSign />
          <ZoomTrack />
          <ZoomPlus />
          <ZoomValue>100%</ZoomValue>
        </ZoomGroup>
      </StatusBar>

      <Dialog>
        <DialogTitle>
          <DialogTitleText>線種とページ罫線と網かけの設定</DialogTitleText>
          <HelpMark>?</HelpMark>
          <CloseSlot>
            <svg width="12" height="12" viewBox="0 0 12 12" stroke="#8a8a8a">
              <path d="M1 1l10 10M11 1 1 11" />
            </svg>
          </CloseSlot>
        </DialogTitle>
        <DialogTabs>
          <DialogTab $width={50}>罫線</DialogTab>
          <DialogTab $width={75} $active>
            ページ罫線
          </DialogTab>
          <DialogTab $width={51}>網かけ</DialogTab>
        </DialogTabs>
        <Panel>
          <StyleColumn>
            <FieldLabel>種類&nbsp;:</FieldLabel>
            <StyleOption>
              <ThumbBox>
                <StyleThumb kind="none" />
              </ThumbBox>
              <span>
                罫線なし(<u>N</u>)
              </span>
            </StyleOption>
            <StyleOption>
              <ThumbBox>
                <StyleThumb kind="box" />
              </ThumbBox>
              <span>
                囲む(<u>X</u>)
              </span>
            </StyleOption>
            <StyleOption>
              <ThumbBox>
                <StyleThumb kind="shadow" />
              </ThumbBox>
              <span>
                影(<u>A</u>)
              </span>
            </StyleOption>
            <StyleOption>
              <ThumbBox>
                <StyleThumb kind="3d" />
              </ThumbBox>
              <span>
                3-D(<u>D</u>)
              </span>
            </StyleOption>
            <StyleOption>
              <ThumbBox>
                <StyleThumb kind="custom" />
              </ThumbBox>
              <span>
                指定(<u>U</u>)
              </span>
            </StyleOption>
          </StyleColumn>

          <LineColumn>
            <FieldLabel>
              種類(<u>Y</u>):
            </FieldLabel>
            <LineList>
              <LineRows>
                {lineStyles.map((pattern, i) => (
                  <LineRow key={pattern} $selected={i === 0}>
                    <LineSample $pattern={pattern} />
                  </LineRow>
                ))}
              </LineRows>
              <ScrollTrack>
                <ScrollArrow>
                  <Chevron />
                </ScrollArrow>
                <ScrollThumb />
                <ScrollArrow>
                  <Chevron down />
                </ScrollArrow>
              </ScrollTrack>
            </LineList>
            <FieldLabel>
              色(<u>C</u>):
            </FieldLabel>
            <ColorCombo>
              <ComboValue>自動</ComboValue>
              <ComboArrow>
                <Chevron down color="#333" />
              </ComboArrow>
            </ColorCombo>
          </LineColumn>

          <PreviewColumn>
            <PreviewHeader>プレビュー</PreviewHeader>
            <PreviewHint>
              下の絵の中、またはボタンをクリッ
              <br />
              クして、罫線を引く位置を指定し
              <br />
              てください。
            </PreviewHint>
            <PreviewStage>
              <SideButtons>
                <BorderToggle>
                  <EdgeGlyph edge="top" />
                </BorderToggle>
                <BorderToggle>
                  <EdgeGlyph edge="bottom" />
                </BorderToggle>
              </SideButtons>
              <PreviewPage>
                <CornerMark $x="l" $y="t" />
                <CornerMark $x="r" $y="t" />
                <CornerMark $x="l" $y="b" />
                <CornerMark $x="r" $y="b" />
                <PreviewLine $width={38} $right />
                {Array.from({ length: 9 }, (_, i) => (
                  <PreviewLine key={i} $width={57} />
                ))}
                <PreviewLine $width={38} />
              </PreviewPage>
            </PreviewStage>
            <BottomButtons>
              <BorderToggle>
                <EdgeGlyph edge="left" />
              </BorderToggle>
              <BorderToggle>
                <EdgeGlyph edge="right" />
              </BorderToggle>
            </BottomButtons>
            <ApplyLabel>
              設定対象(<u>L</u>):
            </ApplyLabel>
            <OptionsRow>
              <OptionsButton />
            </OptionsRow>
          </PreviewColumn>
        </Panel>
        <DialogActions>
          <ActionButton $width={74}>OK</ActionButton>
          <ActionButton $width={74}>キャンセル</ActionButton>
        </DialogActions>
      </Dialog>

      <ColorMenu>
        <MenuRow>
          <AutoSwatch />
          <span>
            自動(<u>A</u>)
          </span>
        </MenuRow>
        <MenuHeader $height={22} $top={1} $spacing={-1.2}>
          テーマの色
        </MenuHeader>
        <PaletteRow $top={3}>
          {themeColumns.map((c) => (
            <Swatch key={c.base} $color={c.base} />
          ))}
        </PaletteRow>
        <PaletteRow $top={5}>
          {themeColumns.map((c, col) => (
            <ShadeColumn key={c.base}>
              {c.shades.map((s, row) => (
                <Shade key={s} $color={s} $selected={col === 4 && row === 3} />
              ))}
            </ShadeColumn>
          ))}
        </PaletteRow>
        <MenuHeader $height={19} $top={4}>
          標準の色
        </MenuHeader>
        <PaletteRow $top={6}>
          {standardColors.map((c) => (
            <Swatch key={c} $color={c} />
          ))}
        </PaletteRow>
        <OtherRow>
          <PieIcon />
          <span>
            その他の色(<u>M</u>)...
          </span>
        </OtherRow>
      </ColorMenu>

      <RedArrow width="30" height="25" viewBox="0 0 30 25">
        <polygon
          points="2,22 6,7 11,11 24,2 28,7 15,16 19,20"
          fill="#f0141e"
          stroke="#fff"
          strokeWidth="1.5"
        />
      </RedArrow>

      <Tooltip>青、アクセント 1、黒 + 基本色 25%</Tooltip>

      <Callout>
        <CalloutLine $indent={18}>④《色》の《▼》をクリックし、一覧から</CalloutLine>
        <CalloutLine $indent={31}>《青、アクセント1、黒+基本色25%》を選択します。</CalloutLine>
      </Callout>
    </Window>
  );
}
